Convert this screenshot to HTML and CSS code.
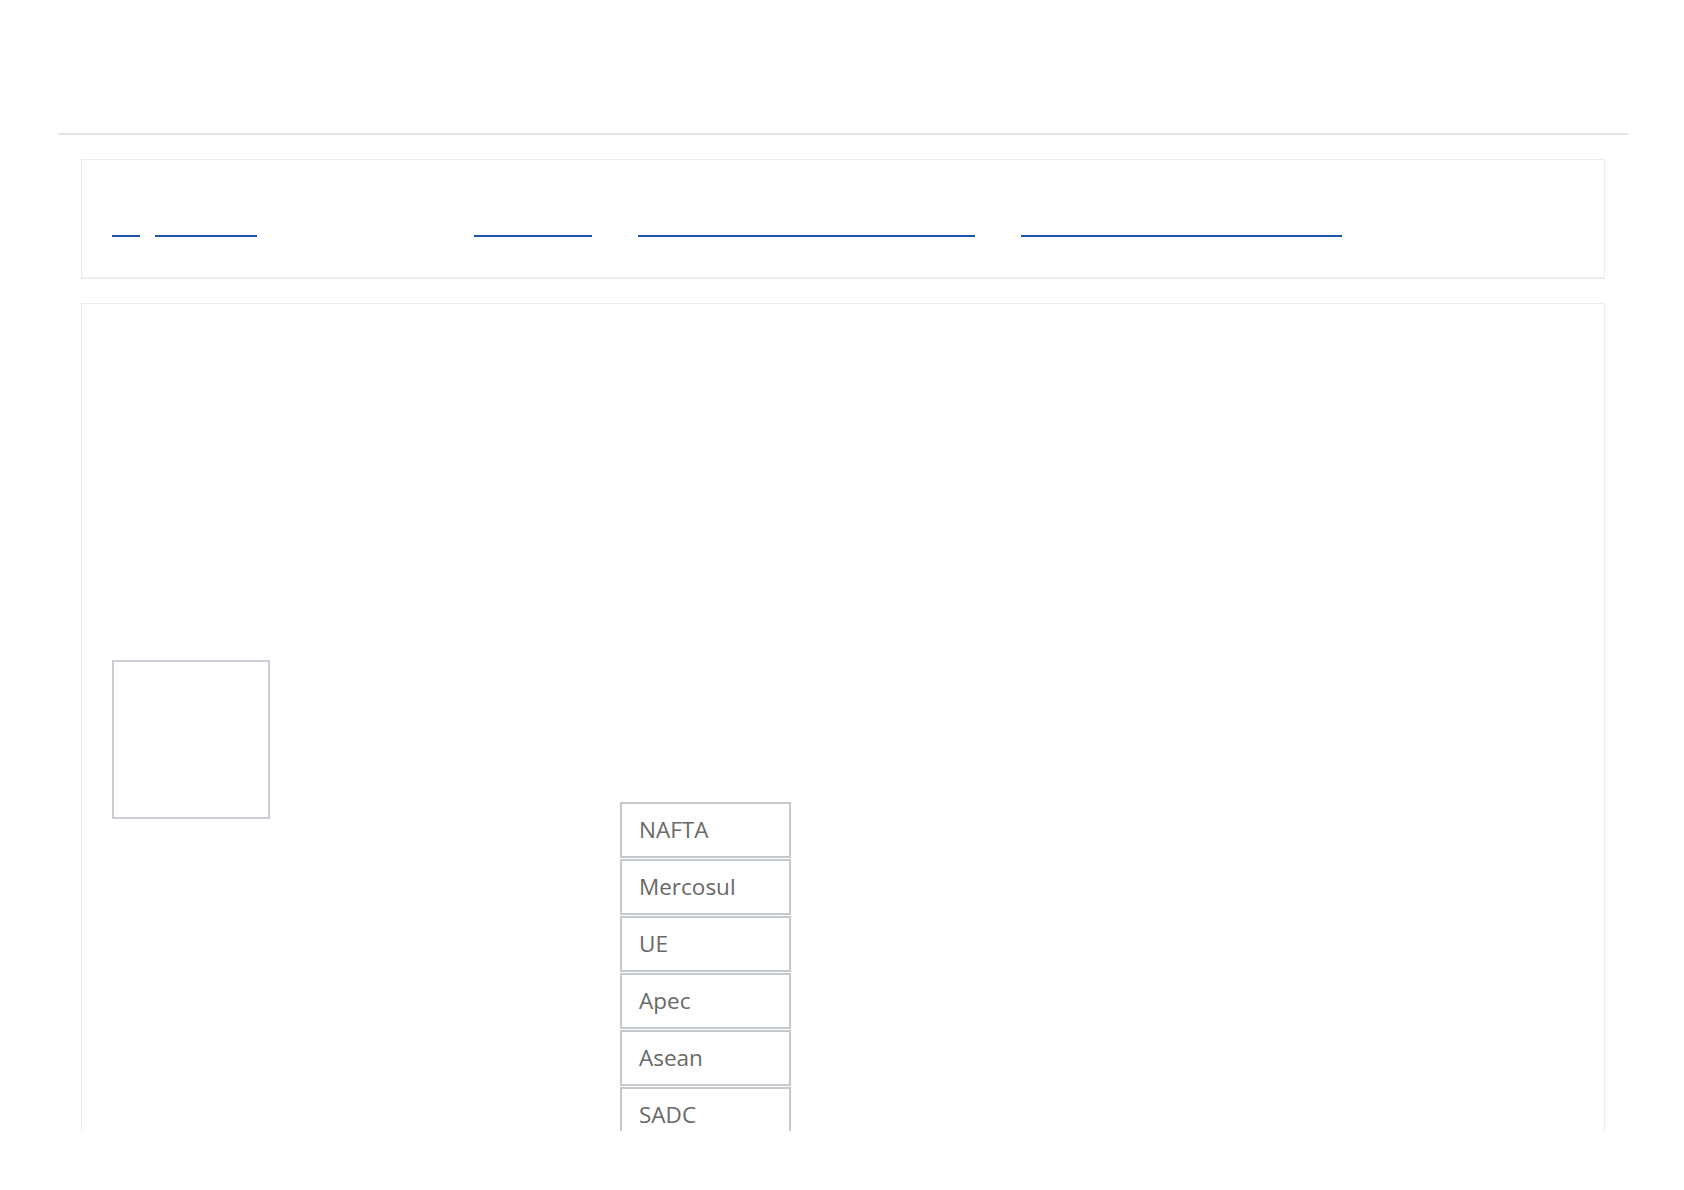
FILE: index.html
```html
<!DOCTYPE html>
<html lang="pt">
<head>
<meta charset="utf-8">
<title>Blocos econômicos</title>
<link rel="stylesheet" href="styles.css">
</head>
<body>
<div class="page">
  <header class="top"></header>
  <div class="rule"></div>
  <nav class="card nav-card">
    <div class="links">
      <a class="link l1" href="#"></a>
      <a class="link l2" href="#"></a>
      <a class="link l3" href="#"></a>
      <a class="link l4" href="#"></a>
      <a class="link l5" href="#"></a>
    </div>
  </nav>
  <main class="card main-card">
    <div class="content">
      <div class="frame"></div>
      <ul class="blocks">
        <li class="block">NAFTA</li>
        <li class="block">Mercosul</li>
        <li class="block">UE</li>
        <li class="block">Apec</li>
        <li class="block">Asean</li>
        <li class="block">SADC</li>
      </ul>
    </div>
  </main>
</div>
</body>
</html>
```
FILE: styles.css
```css
* { box-sizing: border-box; }
html, body { margin: 0; padding: 0; background: #ffffff; }
body { font-family: "Century Gothic", "Open Sans", "DejaVu Sans", sans-serif; }

.page {
  height: 1131px;
  overflow: hidden;
  padding: 0 56px 0 58px;
}

.top { height: 133px; }

.rule {
  height: 2px;
  background: #e7e2e5;
}

.card {
  margin: 0 23px 0 23px;
  border: 1px solid #ececec;
  background: #ffffff;
}

.nav-card {
  margin-top: 24px;
  height: 120px;
  border-bottom-width: 2px;
  padding: 75px 30px 0 30px;
}

.links {
  display: flex;
  align-items: flex-start;
}

.link {
  display: block;
  height: 2px;
  background: #1a52ad;
}
.l1 { width: 28px; }
.l2 { width: 102px; margin-left: 15px; }
.l3 { width: 118px; margin-left: 217px; }
.l4 { width: 337px; margin-left: 46px; }
.l5 { width: 321px; margin-left: 46px; }

.main-card {
  margin-top: 24px;
  height: 900px;
  padding: 356px 30px 0 30px;
}

.content {
  display: flex;
  align-items: flex-start;
}

.frame {
  width: 158px;
  height: 159px;
  border: 2px solid #c9ced7;
  flex: none;
}

.blocks {
  list-style: none;
  margin: 142px 0 0 350px;
  padding: 0;
  width: 171px;
}

.block {
  height: 56px;
  margin-bottom: 1px;
  border: 2px solid #c5c8cd;
  display: flex;
  align-items: center;
  padding: 0 0 2px 17px;
  font-size: 22.5px;
  font-weight: 400;
  color: #686868;
}
```
